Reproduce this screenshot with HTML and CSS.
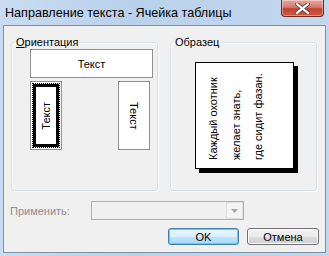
FILE: index.html
```html
<!DOCTYPE html>
<html lang="ru">
<head>
    <meta charset="UTF-8">
    <title>Направление текста - Ячейка таблицы</title>
    <link rel="stylesheet" href="styles.css">
</head>
<body>
    <div class="window">
        <div class="titlebar">
            <span class="title">Направление текста - Ячейка таблицы</span>
            <div class="close-btn">
                <svg width="15" height="11" viewBox="0 0 15 11">
                    <path d="M2 1 L13 10 M13 1 L2 10" stroke="#4a4a4a" stroke-width="4" stroke-linecap="square"/>
                    <path d="M2 1 L13 10 M13 1 L2 10" stroke="#ffffff" stroke-width="2.2" stroke-linecap="square"/>
                </svg>
            </div>
        </div>

        <div class="client">
            <div class="groups">
                <fieldset class="group">
                    <legend><u>О</u>риентация</legend>
                    <div class="hbox">Текст</div>
                    <div class="vrow">
                        <div class="vbox selected">
                            <div class="focus-ring">
                                <div class="sel-frame"><span class="vtext up">Текст</span></div>
                            </div>
                        </div>
                        <div class="vbox"><span class="vtext down">Текст</span></div>
                    </div>
                </fieldset>

                <fieldset class="group">
                    <legend>Образец</legend>
                    <div class="sample">
                        <div class="sample-text">Каждый охотник<br>желает знать,<br>где сидит фазан.</div>
                    </div>
                </fieldset>
            </div>

            <div class="apply-row">
                <span class="apply-label">Применить:</span>
                <div class="combo">
                    <div class="combo-btn">
                        <svg width="7" height="4" viewBox="0 0 7 4"><path d="M0 0 H7 L3.5 4 Z" fill="#a7a7a7"/></svg>
                    </div>
                </div>
            </div>

            <div class="buttons">
                <button class="btn btn-default">OK</button>
                <button class="btn">Отмена</button>
            </div>
        </div>
    </div>
</body>
</html>
```

FILE: styles.css
```css
:root {
    --frame-bg: #bed5ee;
    --client-bg: #f0f0f0;
    --client-border: #7d91a6;
    --group-border: #d5dfe5;
    --box-border: #8f8f8f;
    --disabled-text: #8d8d8d;
    --font-family: 'Liberation Sans', Tahoma, Arial, sans-serif;
}

html, body {
    margin: 0;
    padding: 0;
}

body {
    width: 329px;
    height: 256px;
    overflow: hidden;
    font-family: var(--font-family);
    font-size: 11px;
    color: #000;
}

.window {
    width: 329px;
    height: 256px;
    box-sizing: border-box;
    background: linear-gradient(to right, #c9dcf1 0%, #b9d1ea 40%, #c3d8ef 100%);
    display: flex;
    flex-direction: column;
}

.titlebar {
    height: 25px;
    display: flex;
    justify-content: space-between;
    align-items: flex-start;
}

.title {
    font-size: 12.6px;
    line-height: 14px;
    padding: 6px 0 0 5px;
    color: #000;
}

.close-btn {
    width: 43px;
    height: 17px;
    margin-right: 5px;
    box-sizing: border-box;
    border: 1px solid #6b2a22;
    border-top: none;
    border-radius: 0 0 4px 4px;
    background: linear-gradient(to bottom, #e9a99b 0%, #d47a6b 45%, #c0432f 55%, #d25a3f 100%);
    box-shadow: inset 0 0 0 1px rgba(255, 255, 255, 0.35);
    display: flex;
    align-items: center;
    justify-content: center;
}

.client {
    margin: 0 3px 3px 3px;
    height: 228px;
    box-sizing: border-box;
    border: 1px solid var(--client-border);
    background: var(--client-bg);
    display: flex;
    flex-direction: column;
}

.groups {
    display: flex;
    gap: 12px;
    padding: 10px 0 0 7px;
}

.group {
    width: 147px;
    height: 155px;
    box-sizing: border-box;
    margin: 0;
    padding: 0;
    min-inline-size: 0;
    border: 1px solid var(--group-border);
    border-radius: 3px;
    box-shadow: 1px 1px 0 #fff, inset 1px 1px 0 #fff;
}

.group legend {
    margin-left: 3px;
    padding: 0 1px;
    line-height: 13px;
}

.hbox {
    margin-left: 18px;
    width: 123px;
    height: 29px;
    box-sizing: border-box;
    border: 1px solid var(--box-border);
    background: #fff;
    display: flex;
    align-items: center;
    justify-content: center;
}

.vrow {
    margin: 3px 0 0 18px;
    width: 120px;
    display: flex;
    justify-content: space-between;
}

.vbox {
    width: 32px;
    height: 69px;
    box-sizing: border-box;
    border: 1px solid var(--box-border);
    background: #fff;
    display: flex;
    align-items: center;
    justify-content: center;
}

.vbox.selected {
    padding: 1px;
    align-items: stretch;
}

.focus-ring {
    flex: 1;
    border: 1px dotted #000;
    display: flex;
}

.sel-frame {
    flex: 1;
    border: 3px solid #000;
    display: flex;
    align-items: center;
    justify-content: center;
}

.vtext {
    writing-mode: vertical-rl;
}

.vtext.up {
    transform: rotate(180deg);
}

.sample {
    margin: 13px 0 0 24px;
    width: 99px;
    height: 107px;
    box-sizing: border-box;
    border: 1px solid #000;
    background: #fff;
    box-shadow: 4px 4px 0 #000;
}

.sample-text {
    writing-mode: vertical-rl;
    transform: rotate(180deg);
    height: 90px;
    line-height: 22.5px;
    margin: 7px 0 0 6px;
    white-space: nowrap;
}

.apply-row {
    display: flex;
    align-items: center;
    margin-top: 10px;
    padding-left: 6px;
}

.apply-label {
    width: 81px;
    color: var(--disabled-text);
}

.combo {
    width: 153px;
    height: 19px;
    box-sizing: border-box;
    border: 1px solid #afafaf;
    background: var(--client-bg);
    display: flex;
    justify-content: flex-end;
}

.combo-btn {
    width: 17px;
    box-sizing: border-box;
    border: 1px solid #dedede;
    background: #f4f4f4;
    display: flex;
    align-items: center;
    justify-content: center;
}

.buttons {
    display: flex;
    justify-content: flex-end;
    gap: 8px;
    margin-top: 8px;
    padding-right: 6px;
}

.btn {
    width: 72px;
    height: 17px;
    padding: 0;
    box-sizing: border-box;
    font-family: var(--font-family);
    font-size: 11px;
    color: #000;
    border: 1px solid #707070;
    border-radius: 3px;
    background: linear-gradient(to bottom, #f2f2f2 0%, #ebebeb 50%, #dddddd 51%, #cfcfcf 100%);
    box-shadow: inset 0 0 0 1px #fcfcfc;
}

.btn-default {
    width: 71px;
    border-color: #3c7fb1;
    background: linear-gradient(to bottom, #eaf6fd 0%, #d9f0fc 50%, #bee6fd 51%, #a7d9f5 100%);
    box-shadow: inset 0 0 0 1px #48d8fb;
}
```
